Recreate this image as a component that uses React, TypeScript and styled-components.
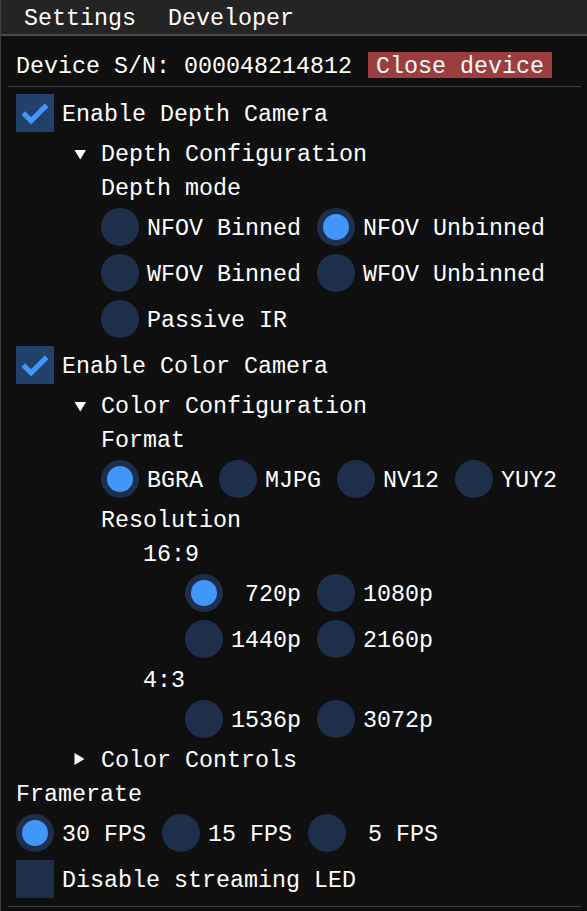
import React from "react";
import styled, { createGlobalStyle } from "styled-components";

const Global = createGlobalStyle`
  html, body { margin: 0; padding: 0; background: #0f0f0f; }
  body {
    font-family: "Liberation Mono", "DejaVu Sans Mono", monospace;
    font-size: 23.333px;
    line-height: 26px;
    color: #ffffff;
  }
  * { box-sizing: border-box; }
`;

const Window = styled.div`
  width: 588px;
  height: 911px;
  border-left: 1px solid #3e3e47;
  background: #0f0f0f;
  overflow: hidden;
`;

const MenuBar = styled.div`
  height: 36px;
  background: #242424;
  border-bottom: 2px solid #494952;
  display: flex;
  gap: 32px;
  padding: 4px 0 0 23px;
`;

const Text = styled.span`
  display: block;
  height: 26px;
  line-height: 22px;
  padding-top: 4px;
  white-space: pre;
`;

const Content = styled.div`
  display: flex;
  flex-direction: column;
  gap: 8px;
  padding: 16px 0 0 15px;
`;

const Line = styled.div<{ $indent?: number }>`
  display: flex;
  align-items: center;
  height: 26px;
  margin-left: ${(p) => p.$indent ?? 0}px;
`;

const Row = styled.div<{ $indent?: number }>`
  display: flex;
  align-items: center;
  gap: 16px;
  height: 38px;
  margin-left: ${(p) => p.$indent ?? 0}px;
`;

const Separator = styled.div`
  height: 1px;
  margin: 0 7px -1px -8px;
  background: #3e3e47;
`;

const CloseButton = styled(Text)`
  background: #9a3e3e;
  padding-left: 8px;
  padding-right: 8px;
  margin-left: 16px;
`;

const ItemWrap = styled.label`
  display: flex;
  align-items: center;
  gap: 8px;
`;

const Box = styled.span<{ $checked?: boolean }>`
  width: 38px;
  height: 38px;
  background: ${(p) => (p.$checked ? "#22406a" : "#1e2f4b")};
  display: flex;
`;

const Circle = styled.span<{ $on?: boolean }>`
  width: 38px;
  height: 38px;
  border-radius: 50%;
  background: #1e2f4b;
  display: flex;
  align-items: center;
  justify-content: center;
  &::after {
    content: "";
    display: ${(p) => (p.$on ? "block" : "none")};
    width: 26px;
    height: 26px;
    border-radius: 50%;
    background: #4296fa;
  }
`;

const Arrow = styled.svg`
  width: 26px;
  height: 26px;
  flex: none;
  margin-right: 8px;
`;

function Checkbox({ label, checked }: { label: string; checked?: boolean }) {
  return (
    <ItemWrap>
      <Box $checked={checked}>
        {checked && (
          <svg width="38" height="38" viewBox="0 0 38 38">
            <polyline
              points="7.3,19 15.1,26.8 30.7,11.2"
              fill="none"
              stroke="#4296fa"
              strokeWidth="5.2"
            />
          </svg>
        )}
      </Box>
      <Text>{label}</Text>
    </ItemWrap>
  );
}

function Radio({ label, on }: { label: string; on?: boolean }) {
  return (
    <ItemWrap>
      <Circle $on={on} />
      <Text>{label}</Text>
    </ItemWrap>
  );
}

function TreeNode({ label, open, indent }: { label: string; open?: boolean; indent: number }) {
  return (
    <Line $indent={indent}>
      <Arrow viewBox="0 0 26 26">
        {open ? (
          <polygon points="7.5,10 19,10 13.25,19.5" fill="#ffffff" />
        ) : (
          <polygon points="7.5,7 7.5,19 17.5,13" fill="#ffffff" />
        )}
      </Arrow>
      <Text>{label}</Text>
    </Line>
  );
}

export default function App() {
  return (
    <>
      <Global />
      <Window>
        <MenuBar>
          <Text>Settings</Text>
          <Text>Developer</Text>
        </MenuBar>
        <Content>
          <Line>
            <Text>Device S/N: 000048214812</Text>
            <CloseButton>Close device</CloseButton>
          </Line>
          <Separator />
          <Row>
            <Checkbox label="Enable Depth Camera" checked />
          </Row>
          <TreeNode label="Depth Configuration" open indent={51} />
          <Line $indent={85}>
            <Text>Depth mode</Text>
          </Line>
          <Row $indent={85}>
            <Radio label="NFOV Binned" />
            <Radio label="NFOV Unbinned" on />
          </Row>
          <Row $indent={85}>
            <Radio label="WFOV Binned" />
            <Radio label="WFOV Unbinned" />
          </Row>
          <Row $indent={85}>
            <Radio label="Passive IR" />
          </Row>
          <Row>
            <Checkbox label="Enable Color Camera" checked />
          </Row>
          <TreeNode label="Color Configuration" open indent={51} />
          <Line $indent={85}>
            <Text>Format</Text>
          </Line>
          <Row $indent={85}>
            <Radio label="BGRA" on />
            <Radio label="MJPG" />
            <Radio label="NV12" />
            <Radio label="YUY2" />
          </Row>
          <Line $indent={85}>
            <Text>Resolution</Text>
          </Line>
          <Line $indent={127}>
            <Text>16:9</Text>
          </Line>
          <Row $indent={169}>
            <Radio label=" 720p" on />
            <Radio label="1080p" />
          </Row>
          <Row $indent={169}>
            <Radio label="1440p" />
            <Radio label="2160p" />
          </Row>
          <Line $indent={127}>
            <Text>4:3</Text>
          </Line>
          <Row $indent={169}>
            <Radio label="1536p" />
            <Radio label="3072p" />
          </Row>
          <TreeNode label="Color Controls" indent={51} />
          <Line>
            <Text>Framerate</Text>
          </Line>
          <Row>
            <Radio label="30 FPS" on />
            <Radio label="15 FPS" />
            <Radio label=" 5 FPS" />
          </Row>
          <Row>
            <Checkbox label="Disable streaming LED" />
          </Row>
          <Separator />
        </Content>
      </Window>
    </>
  );
}
